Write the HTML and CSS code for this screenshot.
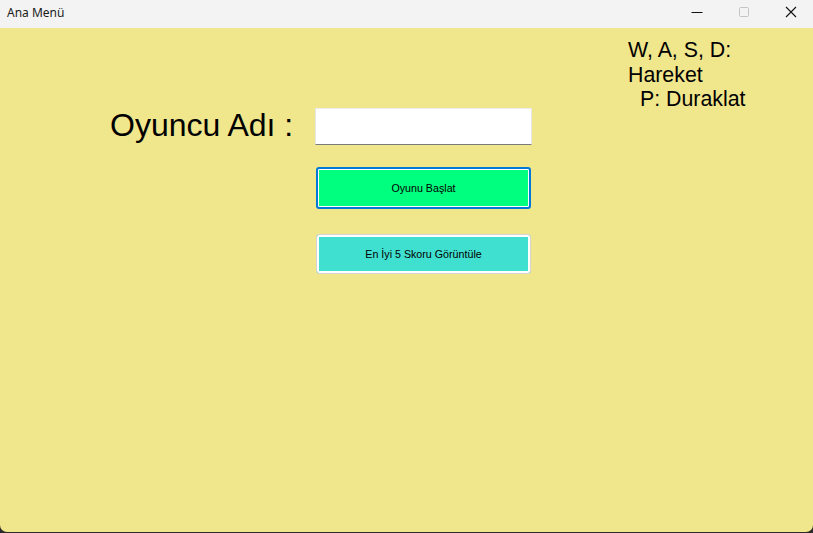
FILE: index.html
```html
<!DOCTYPE html>
<html lang="tr">
<head>
<meta charset="utf-8">
<title>Ana Menü</title>
<link rel="stylesheet" href="styles.css">
</head>
<body>
<div class="window">
  <header class="titlebar">
    <span class="title">Ana Menü</span>
    <div class="controls">
      <span class="ctl">
        <svg width="12" height="12" viewBox="0 0 12 12"><path d="M0.5 6.5h11" stroke="#111" stroke-width="1"/></svg>
      </span>
      <span class="ctl">
        <svg width="12" height="12" viewBox="0 0 12 12"><rect x="1.5" y="1.5" width="9" height="9" rx="1" fill="none" stroke="#c4c4c4" stroke-width="1"/></svg>
      </span>
      <span class="ctl">
        <svg width="12" height="12" viewBox="0 0 12 12"><path d="M1 1L11 11M11 1L1 11" stroke="#111" stroke-width="1.1"/></svg>
      </span>
    </div>
  </header>
  <main class="client">
    <section class="form">
      <label class="name-label" for="name">Oyuncu Adı :</label>
      <input id="name" class="name-input" type="text">
      <button class="btn btn-start">Oyunu Başlat</button>
      <button class="btn btn-scores">En İyi 5 Skoru Görüntüle</button>
    </section>
    <aside class="keys">
      <div>W, A, S, D:</div>
      <div>Hareket</div>
      <div class="indent">P: Duraklat</div>
    </aside>
  </main>
</div>
</body>
</html>
```

FILE: styles.css
```css
html, body {
  margin: 0;
  padding: 0;
}
body {
  background: #2a2a2a;
  width: 813px;
  height: 533px;
  overflow: hidden;
}
.window {
  width: 813px;
  height: 532px;
  background: #f0e68c;
  border-radius: 0 0 7px 7px;
  overflow: hidden;
  display: flex;
  flex-direction: column;
}
.titlebar {
  height: 28px;
  flex: none;
  background: #f3f3f3;
  display: flex;
  align-items: flex-start;
  justify-content: space-between;
}
.title {
  font-family: "Noto Sans", "Open Sans", sans-serif;
  font-size: 12px;
  line-height: 26px;
  color: #1a1a1a;
  padding-left: 7px;
}
.controls {
  display: flex;
  padding-right: 0;
}
.ctl {
  width: 46px;
  height: 24px;
  display: flex;
  align-items: center;
  justify-content: center;
}
.ctl:first-child { margin-right: 1px; }
.ctl:nth-child(2) { margin-right: 1px; }
.ctl svg { display: block; margin-left: 2px; }
.client {
  flex: 1;
  display: flex;
  align-items: flex-start;
  font-family: "Liberation Sans", Arial, sans-serif;
}
.form {
  display: grid;
  grid-template-columns: 205px 217px;
  padding: 80px 0 0 110px;
}
.name-label {
  font-size: 32px;
  line-height: 37px;
  color: #000;
  margin-top: -1px;
  white-space: nowrap;
}
.name-input {
  box-sizing: border-box;
  width: 217px;
  height: 37px;
  margin: 0;
  background: #fff;
  border: none;
  border-bottom: 1px solid #7a7a7a;
  border-left: 1px solid #e6e6e6;
  border-top: 1px solid #ececec;
  border-right: 1px solid #e6e6e6;
  border-radius: 1px;
  outline: none;
}
.btn {
  grid-column: 2;
  box-sizing: border-box;
  margin: 0 0 0 1px;
  width: 215px;
  font-family: "Liberation Sans", Arial, sans-serif;
  font-size: 10.7px;
  color: #000;
  padding: 0;
  border-radius: 3px;
  cursor: default;
}
.btn-start {
  margin-top: 22px;
  height: 42px;
  background: #00ff7f;
  border: 2px solid #0078d7;
  box-shadow: inset 0 0 0 1px #ffffff;
}
.btn-scores {
  margin-top: 25px;
  height: 40px;
  background: #40e0d0;
  border: 1px solid #d4d4d4;
  box-shadow: inset 0 0 0 2px #ffffff;
}
.keys {
  margin: 10px 0 0 96px;
  font-size: 21.33px;
  line-height: 24.5px;
  color: #000;
  white-space: nowrap;
}
.indent {
  padding-left: 12px;
}
```
